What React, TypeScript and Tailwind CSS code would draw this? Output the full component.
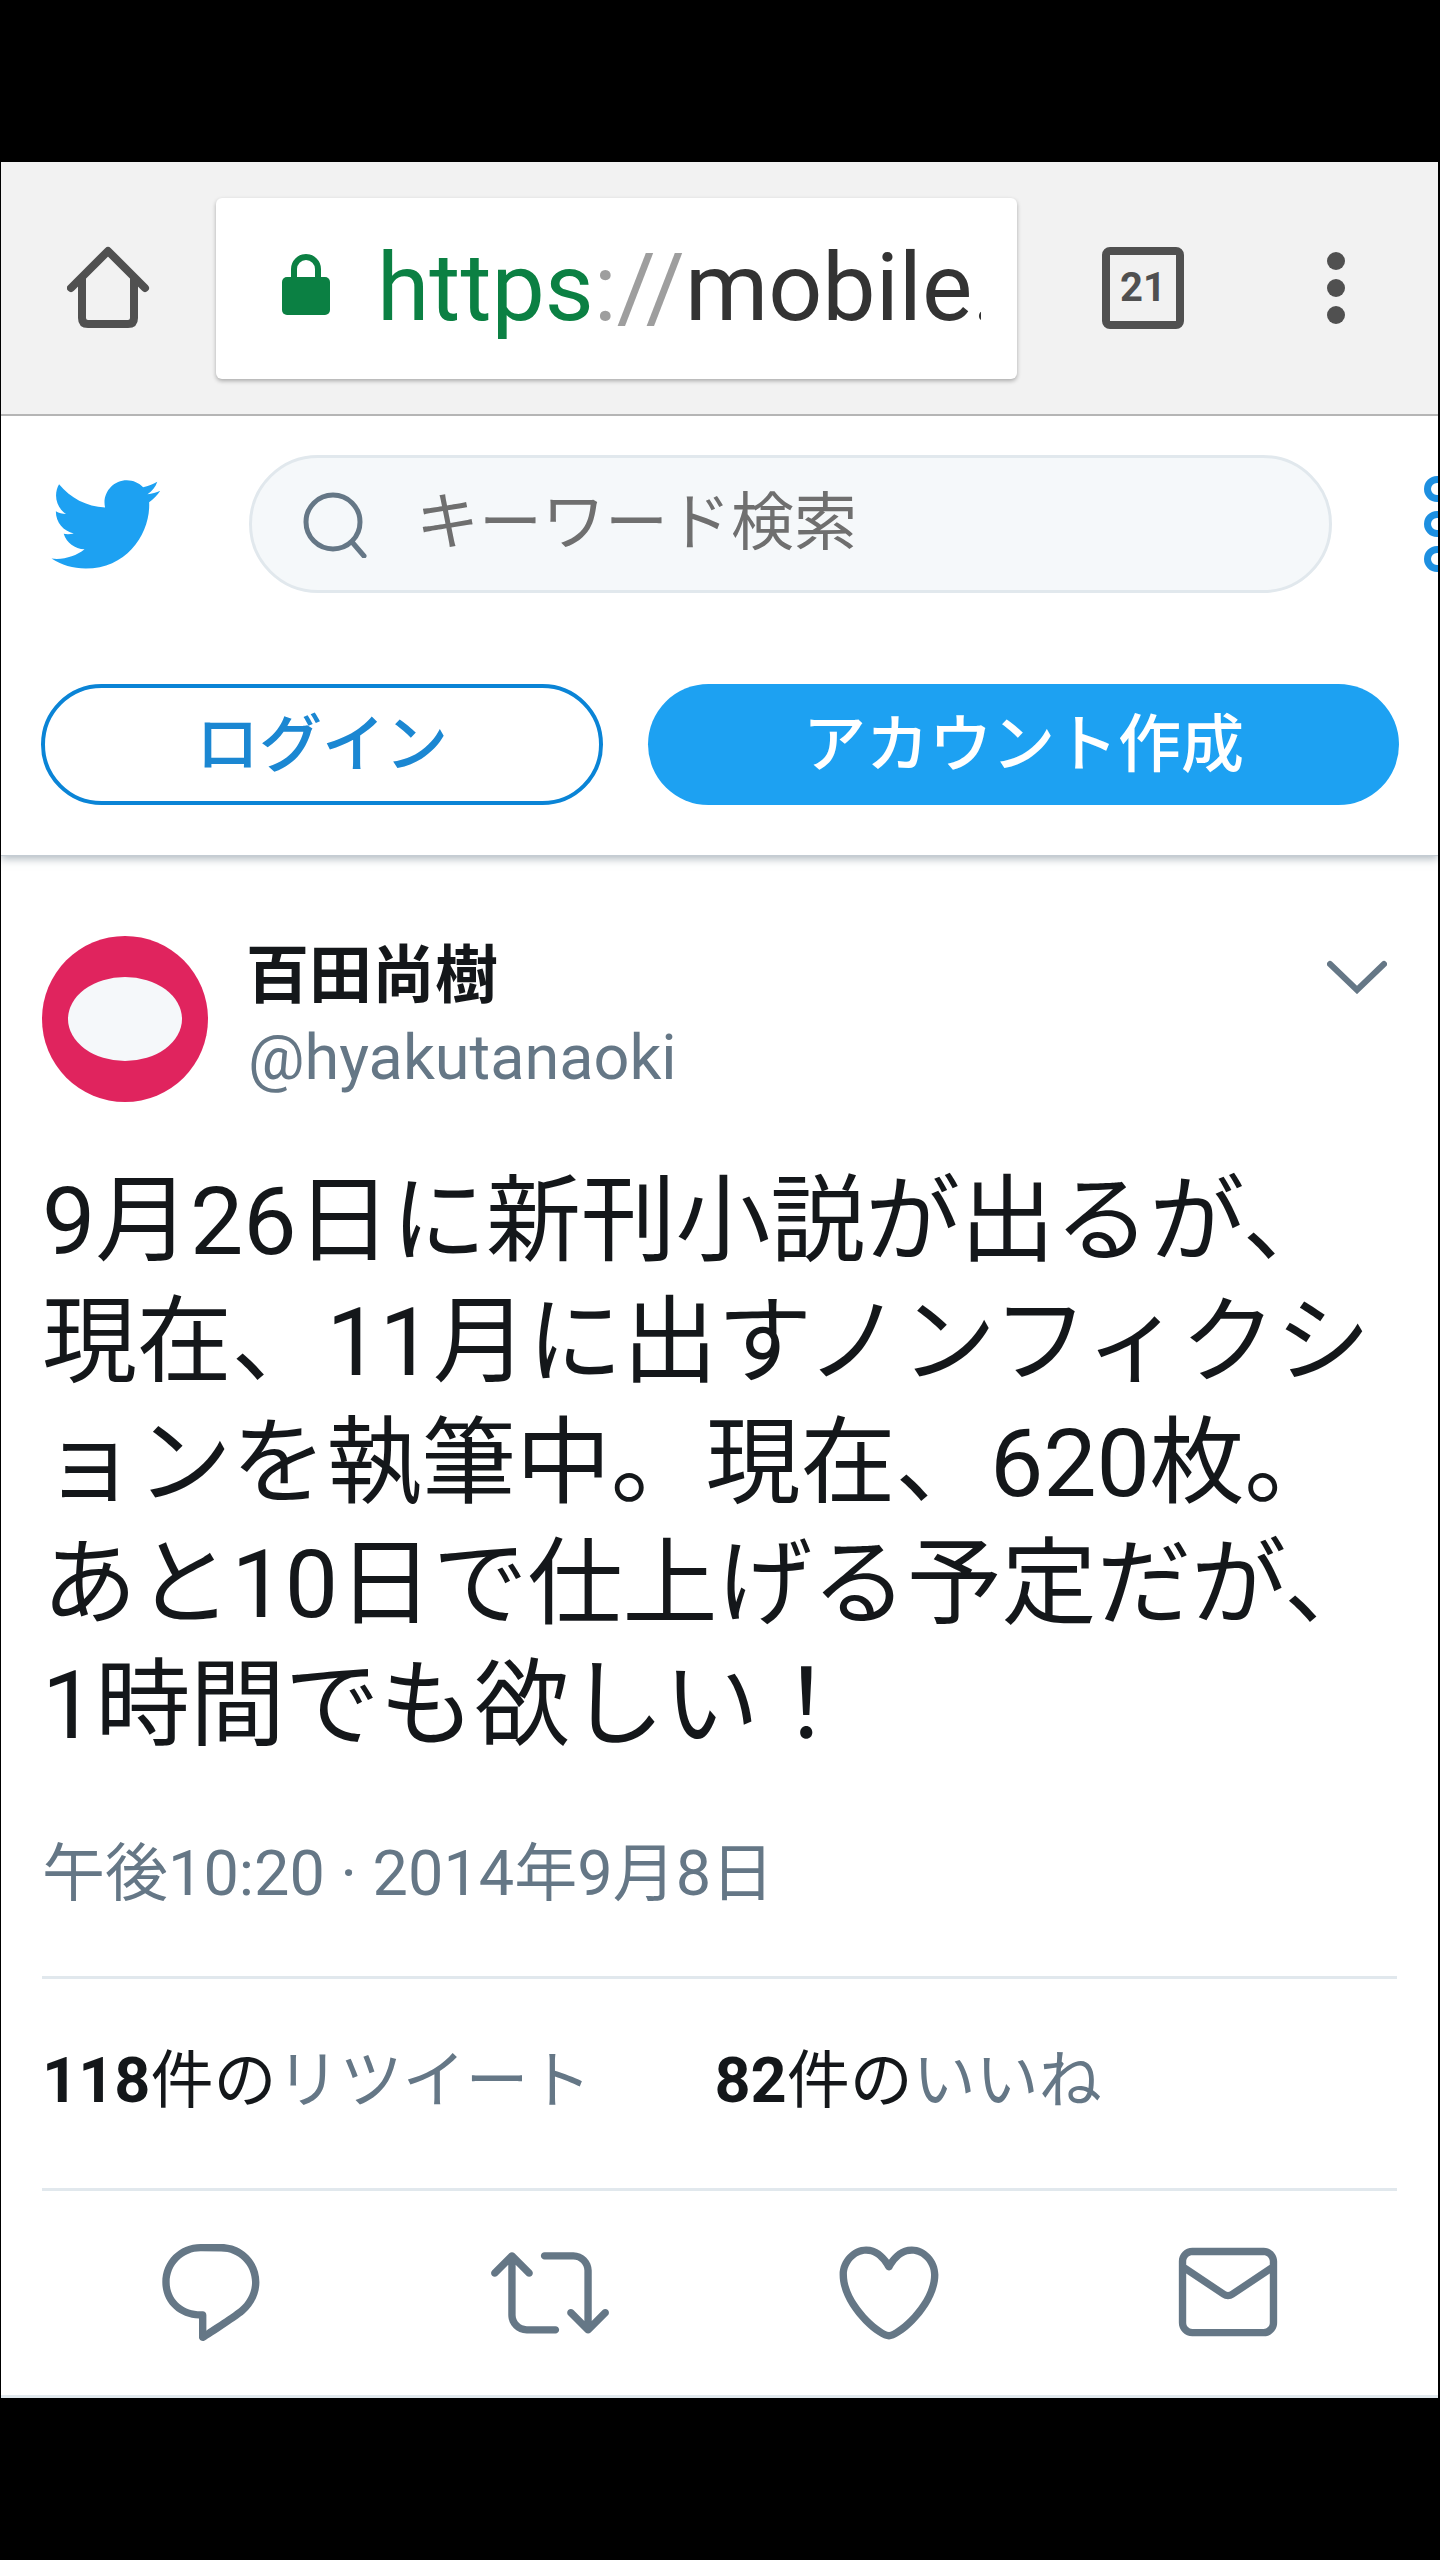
import React from "react";

const JP = "font-['Roboto','Noto_Sans_CJK_JP',sans-serif]";

function Bird() {
  return (
    <svg viewBox="0 0 24 24" className="w-[115px] h-[115px] shrink-0 fill-[#1da1f2]">
      <path d="M23.643 4.937c-.835.37-1.732.62-2.675.733.962-.576 1.7-1.49 2.048-2.578-.9.534-1.897.922-2.958 1.13-.85-.904-2.06-1.47-3.4-1.47-2.572 0-4.658 2.086-4.658 4.66 0 .364.042.718.12 1.06-3.873-.195-7.304-2.05-9.602-4.868-.4.69-.63 1.49-.63 2.342 0 1.616.823 3.043 2.072 3.878-.764-.025-1.482-.234-2.11-.583v.06c0 2.257 1.605 4.14 3.737 4.568-.392.106-.803.162-1.227.162-.3 0-.593-.028-.877-.082.593 1.85 2.313 3.198 4.352 3.234-1.595 1.25-3.604 1.995-5.786 1.995-.376 0-.747-.022-1.112-.065 2.062 1.323 4.51 2.093 7.14 2.093 8.57 0 13.255-7.098 13.255-13.254 0-.2-.005-.402-.014-.602.91-.658 1.7-1.477 2.323-2.41z" />
    </svg>
  );
}

function Action({ d }: { d: string }) {
  return (
    <div className="flex-1 flex items-center justify-center">
      <svg viewBox="0 0 24 24" className="w-[118px] h-[118px] fill-[#657786]">
        <path d={d} />
      </svg>
    </div>
  );
}

export default function App() {
  return (
    <div className={`w-full h-[2560px] bg-black flex flex-col ${JP}`}>
      <div className="h-[162px] shrink-0" />
      <div className="ml-[1px] mr-[2px] flex-1 flex flex-col bg-white overflow-hidden">
        {/* browser toolbar */}
        <div className="h-[254px] shrink-0 bg-[#f2f2f2] border-b-2 border-[#b5b5b5] flex items-center relative z-10">
          <div className="w-[215px] shrink-0 flex items-center justify-center">
            <svg viewBox="0 0 84 84" className="w-[84px] h-[84px] -mt-[1px]" fill="none" stroke="#505050" strokeWidth="8" strokeLinejoin="round" strokeLinecap="round">
              <path d="M4 42 L41 5 L78 42" />
              <path d="M15 33 V72 Q15 78 21 78 H61 Q67 78 67 72 V33" />
            </svg>
          </div>
          <div className="w-[801px] h-[181px] shrink-0 bg-white rounded-[6px] shadow-[0_2px_4px_rgba(0,0,0,0.3)] flex items-center pl-[66px] overflow-hidden">
            <svg viewBox="0 0 48 62" className="w-[48px] h-[62px] shrink-0 -mt-[8px]">
              <path d="M12 28 V16 A12 12 0 0 1 36 16 V28" fill="none" stroke="#0b8043" strokeWidth="6" />
              <rect x="0" y="24" width="48" height="38" rx="5" fill="#0b8043" />
            </svg>
            <div className="ml-[47px] w-[604px] overflow-hidden whitespace-nowrap text-[95px] leading-[104px] font-['Roboto',sans-serif]">
              <span className="text-[#0b8043]">https</span>
              <span className="text-[#9e9e9e]">://</span>
              <span className="text-[#333333]">mobile.</span>
            </div>
          </div>
          <div className="flex-1 flex items-center -mt-[1px]">
            <div className="ml-[85px] w-[82px] h-[82px] rounded-[8px] border-[8px] border-[#505050] flex items-center justify-center text-[40px] font-bold text-[#505050] font-['Roboto',sans-serif]">
              21
            </div>
            <div className="ml-[143px] flex flex-col gap-[9px]">
              <div className="w-[18px] h-[18px] rounded-full bg-[#505050]" />
              <div className="w-[18px] h-[18px] rounded-full bg-[#505050]" />
              <div className="w-[18px] h-[18px] rounded-full bg-[#505050]" />
            </div>
          </div>
        </div>

        {/* twitter header */}
        <div className="h-[440px] shrink-0 flex flex-col shadow-[0_3px_8px_rgba(101,119,134,0.5)] border-b border-[#c4ccd3] relative bg-white">
          <div className="flex items-center mt-[39px] h-[138px] overflow-hidden">
            <div className="w-[248px] shrink-0 pl-[46px]">
              <Bird />
            </div>
            <div className="w-[1083px] h-[138px] shrink-0 rounded-full bg-[#f5f8fa] border-[3px] border-[#e1e8ed] flex items-center pl-[50px]">
              <svg viewBox="0 0 66 66" className="w-[66px] h-[66px] shrink-0 mt-[2px]" fill="none" stroke="#657786" strokeWidth="5" strokeLinecap="round">
                <circle cx="31" cy="30" r="27" />
                <path d="M50 50 L62 64" />
              </svg>
              <span className="ml-[48px] text-[63px] leading-none text-[#6f6f6f] -mt-[4px]">キーワード検索</span>
            </div>
            <div className="ml-[92px] shrink-0 flex flex-col gap-[9px]">
              <div className="w-[26px] h-[26px] rounded-full border-[7px] border-[#1d8fe0]" />
              <div className="w-[26px] h-[26px] rounded-full border-[7px] border-[#1d8fe0]" />
              <div className="w-[26px] h-[26px] rounded-full border-[7px] border-[#1d8fe0]" />
            </div>
          </div>
          <div className="flex mt-[91px] pl-[40px] gap-[45px]">
            <div className="w-[562px] h-[121px] rounded-full border-[4px] border-[#0a84d6] flex items-center justify-center text-[63px] leading-none font-medium text-[#1b87d2]">
              ログイン
            </div>
            <div className="w-[751px] h-[121px] rounded-full bg-[#1da1f2] flex items-center justify-center text-[63px] leading-none font-medium text-white">
              アカウント作成
            </div>
          </div>
        </div>

        {/* tweet */}
        <div className="flex-1 flex flex-col px-[41px] bg-white">
          <div className="flex mt-[80px] items-center">
            <div className="w-[166px] h-[166px] shrink-0 rounded-full bg-[#e0245e] flex items-center justify-center">
              <div className="w-[114px] h-[84px] rounded-[50%] bg-[#f5f8fa]" />
            </div>
            <div className="ml-[40px] flex-1 flex flex-col -mt-[4px]">
              <div className="-ml-[2px] text-[63px] leading-[80px] font-bold text-[#14171a]">百田尚樹</div>
              <div className="text-[63px] leading-[80px] text-[#657786] mt-[2px]">@hyakutanaoki</div>
            </div>
            <svg viewBox="0 0 60 34" className="w-[60px] h-[34px] shrink-0 self-start mt-[24px] mr-[10px]" fill="none" stroke="#657786" strokeWidth="6" strokeLinecap="round">
              <path d="M3 4 L30 30 L57 4" />
            </svg>
          </div>
          <div className="mt-[59px] text-[95px] leading-[121px] tracking-[-0.2px] text-[#14171a] whitespace-nowrap">
            9月26日に新刊小説が出るが、
            <br />
            現在、11月に出すノンフィクシ
            <br />
            ョンを執筆中。現在、620枚。
            <br />
            あと10日で仕上げる予定だが、
            <br />
            1時間でも欲しい！
          </div>
          <div className="mt-[68px] text-[63px] leading-[80px] text-[#657786]">午後10:20 · 2014年9月8日</div>
          <div className="mt-[62px] h-[3px] bg-[#e1e8ed] shrink-0" />
          <div className="h-[209px] shrink-0 flex items-center text-[63px] text-[#657786] gap-[123px] leading-none pb-[6px]">
            <div>
              <span className="font-bold text-[#14171a]">118</span>
              <span className="text-[#14171a]">件の</span>リツイート
            </div>
            <div>
              <span className="font-bold text-[#14171a]">82</span>
              <span className="text-[#14171a]">件の</span>いいね
            </div>
          </div>
          <div className="h-[3px] bg-[#e1e8ed] shrink-0" />
          <div className="flex-1 flex items-center -mx-[1px] pb-[3px]">
            <Action d="M14.046 2.242l-4.148-.01h-.002c-4.374 0-7.8 3.427-7.8 7.802 0 4.098 3.186 7.206 7.465 7.37v3.828c0 .108.044.286.12.403.142.225.384.347.632.347.138 0 .277-.038.402-.118.264-.168 6.473-4.14 8.088-5.506 1.902-1.61 3.04-3.97 3.043-6.312v-.017c-.006-4.367-3.43-7.787-7.8-7.788zm3.787 12.972c-1.134.96-4.862 3.405-6.772 4.643V16.67c0-.414-.335-.75-.75-.75h-.396c-3.66 0-6.318-2.476-6.318-5.886 0-3.534 2.768-6.302 6.3-6.302l4.147.01h.002c3.532 0 6.3 2.766 6.302 6.296-.003 1.91-.942 3.844-2.514 5.176z" />
            <Action d="M23.77 15.67c-.292-.293-.767-.293-1.06 0l-2.22 2.22V7.65c0-2.068-1.683-3.75-3.75-3.75h-5.85c-.414 0-.75.336-.75.75s.336.75.75.75h5.85c1.24 0 2.25 1.01 2.25 2.25v10.24l-2.22-2.22c-.293-.293-.768-.293-1.06 0s-.294.768 0 1.06l3.5 3.5c.145.147.337.22.53.22s.383-.072.53-.22l3.5-3.5c.294-.292.294-.767 0-1.06zm-10.66 3.28H7.26c-1.24 0-2.25-1.01-2.25-2.25V6.46l2.22 2.22c.148.147.34.22.532.22s.384-.073.53-.22c.293-.293.293-.768 0-1.06l-3.5-3.5c-.293-.294-.768-.294-1.06 0l-3.5 3.5c-.294.292-.294.767 0 1.06s.767.293 1.06 0l2.22-2.22V16.7c0 2.068 1.683 3.75 3.75 3.75h5.85c.414 0 .75-.336.75-.75s-.337-.75-.75-.75z" />
            <Action d="M12 21.638h-.014C9.403 21.59 1.95 14.856 1.95 8.478c0-3.064 2.525-5.754 5.403-5.754 2.29 0 3.83 1.58 4.646 2.73.814-1.148 2.354-2.73 4.645-2.73 2.88 0 5.404 2.69 5.404 5.755 0 6.376-7.454 13.11-10.037 13.157H12zM7.354 4.225c-2.08 0-3.903 1.988-3.903 4.255 0 5.74 7.034 11.596 8.55 11.658 1.518-.062 8.55-5.917 8.55-11.658 0-2.267-1.823-4.255-3.903-4.255-2.528 0-3.94 2.936-3.952 2.965-.23.562-1.156.562-1.387 0-.014-.03-1.425-2.965-3.954-2.965z" />
            <Action d="M19.25 3.018H4.75C3.233 3.018 2 4.252 2 5.77v12.495c0 1.518 1.233 2.753 2.75 2.753h14.5c1.517 0 2.75-1.235 2.75-2.753V5.77c0-1.518-1.233-2.752-2.75-2.752zm-14.5 1.5h14.5c.69 0 1.25.56 1.25 1.25v.714l-8.05 5.367c-.273.18-.626.182-.9-.002L3.5 6.482v-.714c0-.69.56-1.25 1.25-1.25zm14.5 14.998H4.75c-.69 0-1.25-.56-1.25-1.25V8.24l7.24 4.83c.383.256.822.384 1.26.384.44 0 .877-.128 1.26-.383l7.24-4.83v10.022c0 .69-.56 1.25-1.25 1.25z" />
          </div>
          <div className="h-[3px] bg-[#e1e8ed] -mx-[41px] shrink-0" />
        </div>
      </div>
      <div className="h-[162px] shrink-0" />
    </div>
  );
}
